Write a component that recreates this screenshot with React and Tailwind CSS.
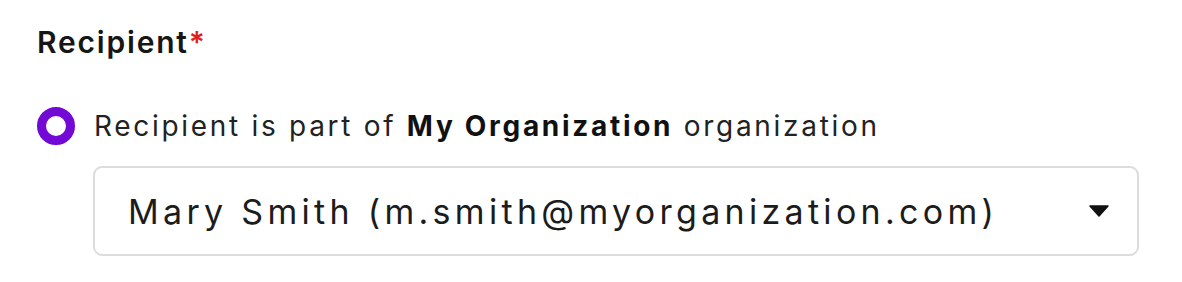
import React from "react";

export default function App() {
  return (
    <div className="w-[1182px] h-[282px] bg-white font-['Inter',sans-serif] text-[#1a1a1a]">
      <div className="pl-[37px] pt-[24px]">
        <div className="text-[30px] font-semibold leading-[36px] tracking-[1.8px] text-[#161616]">
          Recipient<span className="text-[#e0201b]">*</span>
        </div>
        <label className="mt-[47px] flex items-center gap-[19px]">
          <span className="w-[38px] h-[38px] rounded-full border-[9px] border-[#7209d4] bg-white shrink-0" />
          <span className="text-[28px] leading-[36px] tracking-[2.7px] text-[#222]">
            Recipient is part of <b className="font-bold text-[#111]">My Organization</b> organization
          </span>
        </label>
        <div className="ml-[56px] mt-[21px] w-[1046px] h-[90px] rounded-[9px] border-2 border-[#dcdcdc] flex items-center justify-between pl-[33px] pr-[28px]">
          <span className="text-[34px] tracking-[4.3px] text-[#1c1c1c]">Mary Smith (m.smith@myorganization.com)</span>
          <svg width="20" height="12" viewBox="0 0 20 12">
            <path d="M1 1 L19 1 L10 11 Z" fill="#111" stroke="#111" strokeLinejoin="round" strokeWidth="1.5" />
          </svg>
        </div>
      </div>
    </div>
  );
}
